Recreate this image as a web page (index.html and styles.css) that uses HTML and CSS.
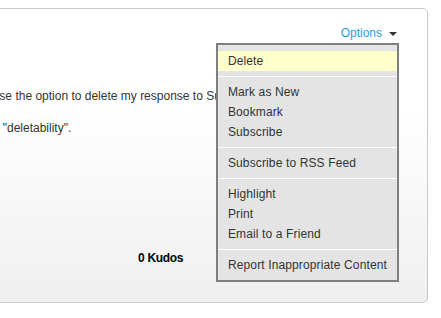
FILE: index.html
```html
<!DOCTYPE html>
<html lang="en">
<head>
    <meta charset="UTF-8">
    <meta name="viewport" content="width=device-width, initial-scale=1.0">
    <title>Message</title>
    <link rel="stylesheet" href="styles.css">
</head>
<body>

    <!-- Message Card -->
    <div class="message-card">
        <div class="message-header">
            <div class="options-menu">
                <span class="options-link">Options</span><span class="options-arrow"></span>

                <!-- Options Dropdown -->
                <div class="options-dropdown">
                    <ul class="menu-group">
                        <li class="menu-item is-active">Delete</li>
                    </ul>
                    <ul class="menu-group">
                        <li class="menu-item">Mark as New</li>
                        <li class="menu-item">Bookmark</li>
                        <li class="menu-item">Subscribe</li>
                    </ul>
                    <ul class="menu-group">
                        <li class="menu-item">Subscribe to RSS Feed</li>
                    </ul>
                    <ul class="menu-group">
                        <li class="menu-item">Highlight</li>
                        <li class="menu-item">Print</li>
                        <li class="menu-item">Email to a Friend</li>
                    </ul>
                    <ul class="menu-group">
                        <li class="menu-item">Report Inappropriate Content</li>
                    </ul>
                </div>
            </div>
        </div>

        <div class="message-body">
            <p>I wish I could use the option to delete my response to Support's post.</p>
            <p>The concept of "deletability".</p>
        </div>

        <div class="kudos-row">0 Kudos</div>
    </div>

</body>
</html>
```
FILE: styles.css
```css
body {
    margin: 0;
    padding-top: 8px;
    font-family: "Liberation Sans", Arial, sans-serif;
    font-size: 12px;
    color: #333;
    background: #fff;
}

/* Card */
.message-card {
    box-sizing: border-box;
    height: 295px;
    margin: 0 13px 0 -101px;
    padding: 0 28px 0 20px;
    border: 1px solid #c9c9c9;
    border-radius: 5px;
    background: linear-gradient(#fff 35%, #efefef);
}

.message-header {
    display: flex;
    justify-content: flex-end;
    padding-top: 16px;
    line-height: 16px;
}

/* Options menu */
.options-menu {
    position: relative;
    padding-right: 2px;
}

.options-link {
    color: #1e9fe3;
}

.options-arrow {
    display: inline-block;
    margin-left: 7px;
    vertical-align: middle;
    border-left: 4px solid transparent;
    border-right: 4px solid transparent;
    border-top: 4px solid #333;
}

.options-dropdown {
    position: absolute;
    top: 18px;
    right: 0;
    z-index: 10;
    border: 2px solid #7f7f7f;
    background: #e4e4e4;
    white-space: nowrap;
}

.menu-group {
    list-style: none;
    margin: 0;
    padding: 5px 0;
    border-top: 1px solid #fff;
}

.menu-group:first-child {
    padding-top: 6px;
    border-top: none;
}

.menu-item {
    padding: 0 10px;
    line-height: 20px;
    letter-spacing: 0.13px;
    color: #333;
}

.menu-item.is-active {
    background: #ffffcc;
}

/* Body text */
.message-body {
    margin-top: 47px;
    line-height: 16px;
}

.message-body p {
    margin: 0;
}

.message-body p + p {
    margin-top: 16px;
}

.kudos-row {
    margin-top: 114px;
    padding-left: 218px;
    line-height: 16px;
    font-weight: bold;
    letter-spacing: -0.3px;
    color: #000;
}
```
